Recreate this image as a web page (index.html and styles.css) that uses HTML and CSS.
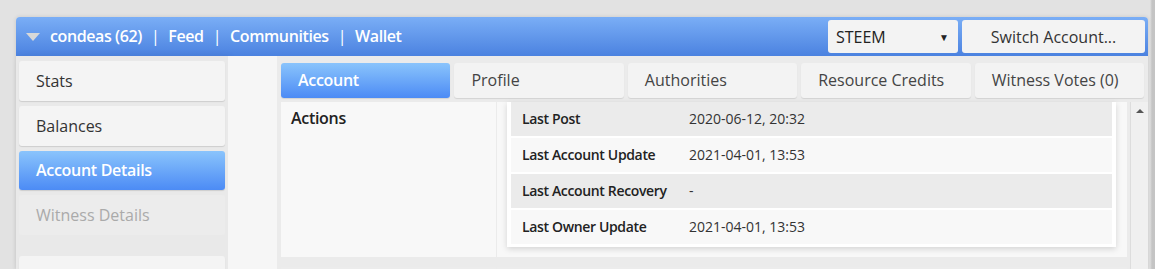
FILE: index.html
```html
<!DOCTYPE html>
<html lang="en">
<head>
    <meta charset="UTF-8">
    <title>Account Details</title>
    <link rel="stylesheet" href="styles.css">
</head>
<body>
    <div class="window">
        <div class="topbar">
            <span class="caret"></span>
            <nav class="crumbs">
                <span>condeas (62)</span>
                <span class="sep">|</span>
                <span>Feed</span>
                <span class="sep">|</span>
                <span>Communities</span>
                <span class="sep">|</span>
                <span>Wallet</span>
            </nav>
            <div class="chain-select">
                <span>STEEM</span>
                <span class="arrow">&#9660;</span>
            </div>
            <button class="switch-button">Switch Account...</button>
        </div>
        <div class="main">
            <div class="sidebar">
                <div class="side-item">Stats</div>
                <div class="side-item">Balances</div>
                <div class="side-item active">Account Details</div>
                <div class="side-item disabled">Witness Details</div>
                <div class="side-item spaced"></div>
            </div>
            <div class="gutter"></div>
            <div class="content">
                <div class="tabs">
                    <div class="tab active">Account</div>
                    <div class="tab">Profile</div>
                    <div class="tab">Authorities</div>
                    <div class="tab">Resource Credits</div>
                    <div class="tab">Witness Votes (0)</div>
                </div>
                <div class="panel">
                    <div class="rows">
                        <div class="row">
                            <div class="row-title">Actions</div>
                            <div class="row-body">
                                <div class="details">
                                    <div class="detail odd">
                                        <div class="label">Last Post</div>
                                        <div class="value">2020-06-12, 20:32</div>
                                    </div>
                                    <div class="detail">
                                        <div class="label">Last Account Update</div>
                                        <div class="value">2021-04-01, 13:53</div>
                                    </div>
                                    <div class="detail odd">
                                        <div class="label">Last Account Recovery</div>
                                        <div class="value">-</div>
                                    </div>
                                    <div class="detail">
                                        <div class="label">Last Owner Update</div>
                                        <div class="value">2021-04-01, 13:53</div>
                                    </div>
                                </div>
                            </div>
                        </div>
                        <div class="row shaded">
                            <div class="row-title"></div>
                            <div class="row-body"></div>
                        </div>
                    </div>
                    <div class="scrollbar">
                        <span class="scroll-up"></span>
                    </div>
                </div>
            </div>
        </div>
    </div>
</body>
</html>
```

FILE: styles.css
```css
body {
    font-family: "Open Sans", Arial, sans-serif;
    background: linear-gradient(90deg, #e2e2e2 1150px, #c4c4c4 1152px);
    margin: 0;
    padding: 17px 0 0 16px;
    height: 252px;
    overflow: hidden;
    color: #333;
}

.window {
    width: 1132px;
    background-color: #e9e9e9;
    box-shadow: 0 0 4px rgba(0,0,0,0.12);
    border-radius: 4px 4px 0 0;
}

.topbar {
    height: 39px;
    display: flex;
    align-items: center;
    background: linear-gradient(#7aaef6, #4b82e0);
    border-radius: 4px 4px 0 0;
    padding: 0 3px 0 10px;
    box-sizing: border-box;
}

.caret {
    width: 0;
    height: 0;
    border-left: 7px solid transparent;
    border-right: 7px solid transparent;
    border-top: 8px solid #d8d8d8;
    margin-right: 10px;
    margin-top: 1px;
}

.crumbs {
    flex: 1;
    color: #fff;
    font-size: 16px;
    font-weight: 600;
    letter-spacing: -0.4px;
    display: flex;
    gap: 9px;
    margin-top: -2px;
}

.crumbs .sep {
    font-weight: 400;
}

.chain-select {
    width: 130px;
    height: 33px;
    box-sizing: border-box;
    background-color: #f3f3f3;
    border-radius: 3px;
    display: flex;
    align-items: center;
    justify-content: space-between;
    padding: 0 9px 0 8px;
    font-size: 16px;
    color: #222;
    margin-right: 4px;
}

.chain-select .arrow {
    font-size: 10px;
}

.switch-button {
    width: 183px;
    height: 33px;
    border: none;
    border-radius: 3px;
    background-color: #f3f3f3;
    font-family: "Open Sans", Arial, sans-serif;
    font-size: 16px;
    color: #333;
}

.main {
    display: flex;
    height: 214px;
}

.sidebar {
    width: 212px;
    padding: 5px 3px 0 3px;
    box-sizing: border-box;
    display: flex;
    flex-direction: column;
    gap: 5px;
    box-shadow: 2px 0 8px rgba(0,0,0,0.06);
}

.side-item {
    height: 40px;
    flex-shrink: 0;
    background-color: #f4f4f4;
    border-radius: 3px;
    box-shadow: 0 1px 1px rgba(0,0,0,0.12);
    font-size: 16px;
    padding-left: 17px;
    line-height: 40px;
    color: #333;
}

.side-item.active {
    background: linear-gradient(#8ac4fc, #4c8bf5);
    color: #fff;
    font-weight: 600;
    letter-spacing: -0.3px;
    line-height: 39px;
    height: 39px;
}

.side-item.disabled {
    background-color: #ececec;
    color: #aaa;
    box-shadow: none;
}

.side-item.spaced {
    margin-top: 16px;
}

.gutter {
    width: 49px;
    background-color: #f6f6f6;
}

.content {
    flex: 1;
    display: flex;
    flex-direction: column;
}

.tabs {
    display: flex;
    gap: 4px;
    padding: 7px 4px 4px 4px;
    background-color: #ebebeb;
}

.tab {
    flex: 1;
    height: 35px;
    background-color: #f3f3f3;
    border-radius: 3px;
    box-shadow: 0 1px 1px rgba(0,0,0,0.1);
    font-size: 16px;
    line-height: 35px;
    padding-left: 17px;
    color: #444;
}

.tab.active {
    background: linear-gradient(#8ac4fc, #4c8bf5);
    color: #fff;
    font-weight: 600;
    letter-spacing: -0.3px;
}

.panel {
    flex: 1;
    display: flex;
    padding-left: 4px;
    background-color: #ebebeb;
}

.rows {
    flex: 1;
    display: flex;
    flex-direction: column;
    gap: 10px;
}

.row {
    display: flex;
    gap: 1px;
}

.row-title {
    width: 215px;
    background-color: #f8f8f8;
    font-size: 16px;
    font-weight: 600;
    letter-spacing: -0.3px;
    color: #222;
    padding: 5px 10px;
    box-sizing: border-box;
}

.row-body {
    flex: 1;
    background-color: #f8f8f8;
    padding: 0 11px 10px 10px;
}

.row.shaded .row-title,
.row.shaded .row-body {
    background-color: #ececec;
    height: 20px;
}

.details {
    background-color: #fff;
    box-shadow: 0 2px 6px rgba(0,0,0,0.15);
    padding: 0 4px 3px 4px;
    display: flex;
    flex-direction: column;
    gap: 2px;
}

.detail {
    display: flex;
    height: 34px;
    gap: 2px;
    font-size: 14px;
    line-height: 34px;
    background-color: #f8f8f8;
}

.detail.odd {
    background-color: #ebebeb;
}

.detail .label {
    width: 166px;
    padding-left: 11px;
    box-sizing: border-box;
    font-weight: 600;
    letter-spacing: -0.35px;
    color: #222;
}

.detail .value {
    flex: 1;
    padding-left: 10px;
    color: #333;
    background-color: inherit;
}

.scrollbar {
    width: 17px;
    background-color: #f0f0f0;
    border-left: 1px solid #ddd;
    margin-left: 3px;
    position: relative;
}

.scroll-up {
    position: absolute;
    top: 7px;
    left: 5px;
    width: 0;
    height: 0;
    border-left: 4px solid transparent;
    border-right: 4px solid transparent;
    border-bottom: 4px solid #555;
}
```
